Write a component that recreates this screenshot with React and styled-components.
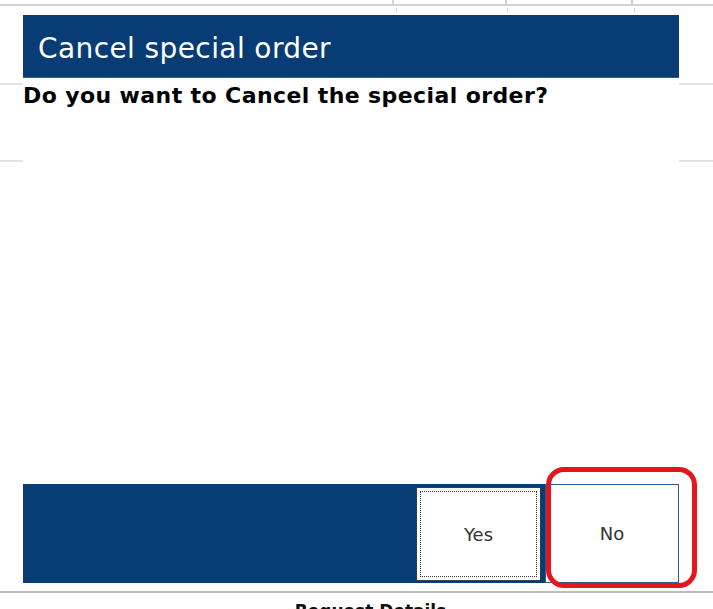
import React from "react";
import styled, { createGlobalStyle } from "styled-components";

const GlobalStyle = createGlobalStyle`
  html, body { margin: 0; padding: 0; background: #ffffff; }
  body { overflow: hidden; font-family: "DejaVu Sans", Tahoma, sans-serif; }
`;

const Page = styled.div`
  position: relative;
  width: 713px;
  height: 609px;
  overflow: hidden;
  background: #ffffff;
`;

const TopCells = styled.div`
  display: grid;
  grid-template-columns: 394px 113px 126px 1fr;
  height: 4px;
  border-bottom: 2px solid #d3d3d3;
`;

const TopCell = styled.div`
  border-right: ${(p) => (p.$last ? "none" : "2px solid #d3d3d3")};
`;

const Ticks = styled.div`
  display: grid;
  grid-template-columns: 397px 111px 127px 1fr;
  height: 5px;
  margin-top: 2px;
`;

const Tick = styled.div`
  border-right: ${(p) => (p.$last ? "none" : "1px dashed #d8d8d8")};
`;

const BgRow = styled.div`
  height: ${(p) => p.$h}px;
  border-bottom: 2px solid ${(p) => p.$line};
`;

const SectionHeading = styled.div`
  padding: 7px 0 0 28px;
  text-align: center;
  font-family: "DejaVu Sans", sans-serif;
  font-weight: bold;
  font-size: 17px;
  line-height: 22px;
  color: #111111;
`;

const Dialog = styled.div`
  position: absolute;
  top: 15px;
  left: 23px;
  width: 656px;
  height: 568px;
  display: flex;
  flex-direction: column;
  background: #ffffff;
`;

const TitleBar = styled.div`
  height: 63px;
  background: #073d74;
  color: #ffffff;
  display: flex;
  align-items: center;
  padding-left: 15px;
  padding-top: 4px;
  font-family: "DejaVu Sans", sans-serif;
  font-size: 28px;
  letter-spacing: 0.4px;
  box-sizing: border-box;
  border-bottom: 1px solid #2f5e90;
`;

const Body = styled.div`
  flex: 1;
  padding-top: 5px;
`;

const Question = styled.div`
  font-family: "DejaVu Sans", sans-serif;
  font-weight: bold;
  font-size: 22px;
  line-height: 26px;
  letter-spacing: 0.4px;
  color: #000000;
`;

const Footer = styled.div`
  height: 99px;
  display: flex;
  justify-content: flex-end;
  background: linear-gradient(to right, #073d74 0, #073d74 522px, transparent 522px);
`;

const YesButton = styled.button`
  width: 125px;
  margin: 3px 4px 2px 0;
  background: #ffffff;
  border: 1px solid #3a3a3a;
  outline: 1px dotted #3a3a3a;
  outline-offset: -5px;
  font-family: "DejaVu Sans", sans-serif;
  font-size: 18px;
  color: #333333;
  padding: 0;
`;

const NoButton = styled.button`
  width: 134px;
  background: #ffffff;
  border: 1px solid #2b5a8c;
  font-family: "DejaVu Sans", sans-serif;
  font-size: 18px;
  color: #333333;
  padding: 0;
`;

const Highlight = styled.div`
  position: absolute;
  left: 546px;
  top: 467px;
  width: 151px;
  height: 121px;
  box-sizing: border-box;
  border: 5px solid #e3151d;
  border-radius: 18px;
  pointer-events: none;
`;

export default function App() {
  return (
    <>
      <GlobalStyle />
      <Page>
        <TopCells>
          <TopCell />
          <TopCell />
          <TopCell />
          <TopCell $last />
        </TopCells>
        <Ticks>
          <Tick />
          <Tick />
          <Tick />
          <Tick $last />
        </Ticks>
        <BgRow $h={70} $line="#e2e2e2" />
        <BgRow $h={75} $line="#e2e2e2" />
        <BgRow $h={429} $line="#bcbcbc" />
        <SectionHeading>Request Details</SectionHeading>
        <Dialog>
          <TitleBar>Cancel special order</TitleBar>
          <Body>
            <Question>Do you want to Cancel the special order?</Question>
          </Body>
          <Footer>
            <YesButton>Yes</YesButton>
            <NoButton>No</NoButton>
          </Footer>
        </Dialog>
        <Highlight />
      </Page>
    </>
  );
}
